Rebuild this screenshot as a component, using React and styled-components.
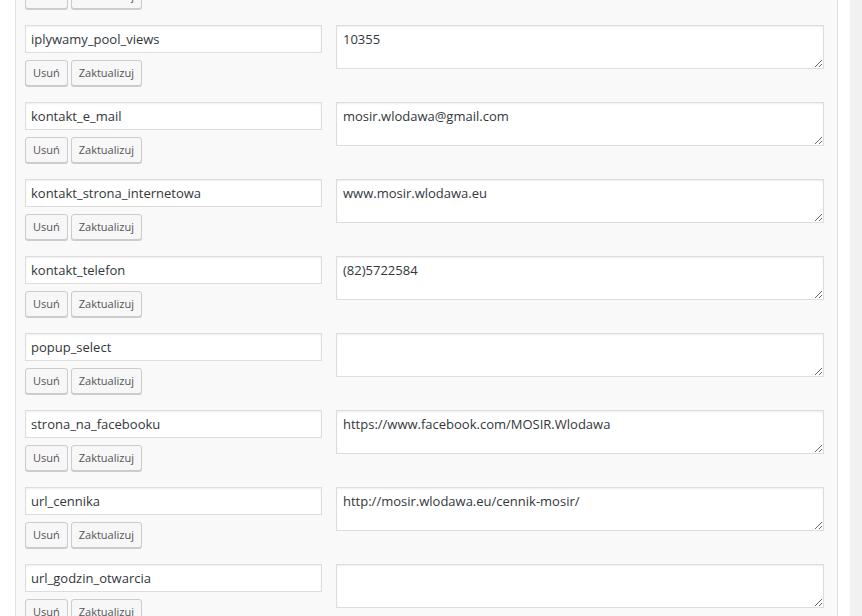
import React from "react";
import styled, { createGlobalStyle } from "styled-components";

const GlobalStyle = createGlobalStyle`
  html, body {
    margin: 0;
    padding: 0;
    background: #f1f1f1;
    overflow: hidden;
    height: 616px;
  }
`

const Page = styled.div`
  width: 823px;
  padding: 0 12px 40px 15px;
  background: #fff;
  font-family: "Open Sans", "Liberation Sans", sans-serif;
`

const Panel = styled.div`
  margin-top: -52px;
  background: #f9f9f9;
  border: 1px solid #e1e1e1;
  border-top: 0;
  padding: 0 12px 0 9px;
`

const Row = styled.div`
  display: flex;
  gap: 14px;
  height: 77px;
`

const KeyCol = styled.div`
  width: 297px;
  display: flex;
  flex-direction: column;
  gap: 7px;
`

const KeyInput = styled.input`
  box-sizing: border-box;
  width: 297px;
  height: 28px;
  margin: 0;
  padding: 0 5px;
  border: 1px solid #ddd;
  box-shadow: inset 0 1px 2px rgba(0, 0, 0, 0.07);
  background: #fff;
  color: #32373c;
  font-family: "Open Sans", "Liberation Sans", sans-serif;
  font-size: 13px;
  outline: none;
`

const ValueArea = styled.textarea`
  box-sizing: border-box;
  width: 488px;
  height: 44px;
  margin: 0;
  padding: 3px 6px;
  border: 1px solid #ddd;
  box-shadow: inset 0 1px 2px rgba(0, 0, 0, 0.07);
  background: #fff;
  color: #32373c;
  font-family: "Open Sans", "Liberation Sans", sans-serif;
  font-size: 13px;
  line-height: 20px;
  outline: none;
`

const Buttons = styled.div`
  display: flex;
  gap: 3px;
`

const SmallButton = styled.button`
  box-sizing: border-box;
  height: 26px;
  padding: 0 7px 1px;
  border: 1px solid #ccc;
  border-radius: 3px;
  background: #f7f7f7;
  box-shadow: 0 1px 0 #ccc;
  color: #555;
  font-family: "Open Sans", "Liberation Sans", sans-serif;
  font-size: 11px;
  cursor: pointer;
`

const fields = [
  { key: "iplywamy_pool_id", value: "" },
  { key: "iplywamy_pool_views", value: "10355" },
  { key: "kontakt_e_mail", value: "mosir.wlodawa@gmail.com" },
  { key: "kontakt_strona_internetowa", value: "www.mosir.wlodawa.eu" },
  { key: "kontakt_telefon", value: "(82)5722584" },
  { key: "popup_select", value: "" },
  { key: "strona_na_facebooku", value: "https://www.facebook.com/MOSIR.Wlodawa" },
  { key: "url_cennika", value: "http://mosir.wlodawa.eu/cennik-mosir/" },
  { key: "url_godzin_otwarcia", value: "" },
]

export default function App() {
  return (
    <>
      <GlobalStyle />
      <Page>
        <Panel>
          {fields.map((f) => (
            <Row key={f.key}>
              <KeyCol>
                <KeyInput type="text" defaultValue={f.key} />
                <Buttons>
                  <SmallButton>Usuń</SmallButton>
                  <SmallButton>Zaktualizuj</SmallButton>
                </Buttons>
              </KeyCol>
              <ValueArea defaultValue={f.value} />
            </Row>
          ))}
        </Panel>
      </Page>
    </>
  )
}
